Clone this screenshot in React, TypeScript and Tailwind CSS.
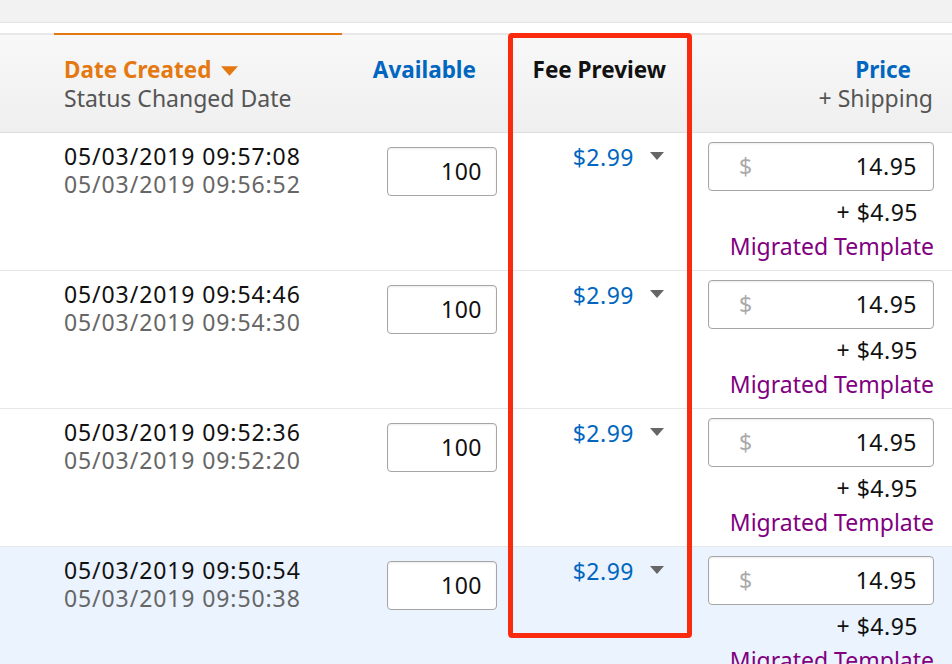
const rows = [
  { created: "05/03/2019 09:57:08", changed: "05/03/2019 09:56:52", selected: false },
  { created: "05/03/2019 09:54:46", changed: "05/03/2019 09:54:30", selected: false },
  { created: "05/03/2019 09:52:36", changed: "05/03/2019 09:52:20", selected: false },
  { created: "05/03/2019 09:50:54", changed: "05/03/2019 09:50:38", selected: true },
];

function Caret({ className, w = 14, h = 8 }: { className: string; w?: number; h?: number }) {
  return (
    <svg width={w} height={h} viewBox="0 0 14 8" className={className}>
      <path d="M0 0 L14 0 L7 8 Z" fill="currentColor" />
    </svg>
  );
}

export default function App() {
  return (
    <div className="relative w-[952px] h-[664px] overflow-hidden bg-white text-[23px] text-[#111] font-['Noto_Sans',sans-serif]">
      {/* верхняя полоса */}
      <div className="h-[23px] bg-[#f2f2f2] border-b border-[#e3e3e3]"></div>
      <div className="h-[10px] bg-white"></div>
      <div className="flex h-[2px] bg-[#e8e8e8]">
        <div className="w-[54px]"></div>
        <div className="w-[288px] bg-[#e47911]"></div>
      </div>

      {/* шапка таблицы */}
      <div className="flex h-[98px] bg-gradient-to-b from-[#f8f8f8] to-[#efefef] border-b border-[#dedede] leading-[28px]">
        <div className="w-[342px] pl-[64px] pt-[21px]">
          <div className="flex items-center gap-[10px] font-bold text-[22.5px] text-[#e47911]">
            Date Created
            <Caret className="text-[#e47911] mt-[2px]" w={17} h={10} />
          </div>
          <div className="text-[#555]">Status Changed Date</div>
        </div>
        <div className="w-[167px] pr-[33px] pt-[21px] text-right font-bold text-[22.5px] text-[#0066c0]">Available</div>
        <div className="w-[182px] pr-[25px] pt-[21px] text-right font-bold text-[22.5px] text-[#111]">Fee Preview</div>
        <div className="flex-1 pr-[19px] pt-[21px] text-right">
          <div className="font-bold text-[22.5px] text-[#0066c0] pr-[22px]">Price</div>
          <div className="text-[#555]">+ Shipping</div>
        </div>
      </div>

      {/* строки */}
      {rows.map((r, i) => (
        <div
          key={i}
          className={`flex h-[138px] border-b border-[#e7e7e7] ${r.selected ? "bg-[#eaf3fe]" : "bg-white"}`}
        >
          <div className="w-[342px] pl-[64px] pt-[9px] leading-[28px] tracking-[0.9px]">
            <div className="text-[#111]">{r.created}</div>
            <div className="text-[#666]">{r.changed}</div>
          </div>
          <div className="w-[167px] pl-[45px] pt-[14px]">
            <div className="w-[110px] h-[49px] rounded-[4px] border border-[#a6a6a6] bg-white flex items-center justify-end pr-[14px] tracking-[0.5px] shadow-[inset_0_1px_2px_rgba(0,0,0,0.08)]">
              100
            </div>
          </div>
          <div className="w-[182px] pt-[10px] pr-[27px] flex justify-end items-start leading-[28px]">
            <span className="text-[#0066c0] tracking-[0.5px]">$2.99</span>
            <Caret className="text-[#666] ml-[16px] mt-[9px]" />
          </div>
          <div className="flex-1 pt-[9px] pl-[17px] pr-[18px] text-right">
            <div className="h-[49px] rounded-[4px] border border-[#a6a6a6] bg-white flex items-center justify-between pl-[30px] pr-[16px] shadow-[inset_0_1px_2px_rgba(0,0,0,0.08)]">
              <span className="text-[#aaa]">$</span>
              <span className="tracking-[0.5px]">14.95</span>
            </div>
            <div className="leading-[34px] mt-[4px] pr-[16px] tracking-[0.5px]">+ $4.95</div>
            <div className="leading-[34px] text-[#800080]">Migrated Template</div>
          </div>
        </div>
      ))}

      {/* красная рамка поверх колонки */}
      <div className="absolute left-[508px] top-[33px] w-[184px] h-[605px] border-[5px] border-[#fa2a0f] rounded-[4px] pointer-events-none"></div>
    </div>
  );
}
